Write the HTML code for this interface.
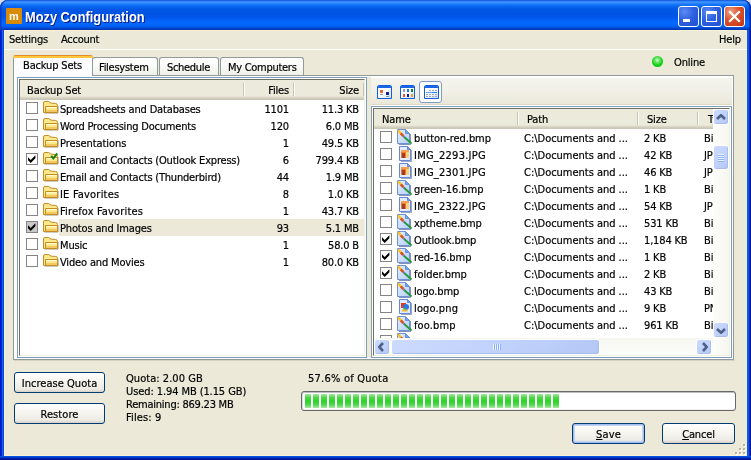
<!DOCTYPE html>
<html>
<head>
<meta charset="utf-8">
<title>Mozy Configuration</title>
<style>
html,body{margin:0;padding:0;}
body{width:751px;height:460px;overflow:hidden;background:#ECE9D8;position:relative;
  font-family:"DejaVu Sans Condensed","Liberation Sans",sans-serif;font-size:11px;color:#000;letter-spacing:-0.16px;}
*{box-sizing:border-box;}
.abs{position:absolute;}
.t{-webkit-text-stroke:0.2px currentColor;opacity:0.999;position:absolute;white-space:nowrap;line-height:13px;height:13px;}
/* window frame */
#titlebar{left:0;top:0;width:751px;height:30px;
  background:linear-gradient(to bottom,#0A44D2 0px,#2C80F8 1px,#3C90FF 2.5px,#1C7CFC 4px,#0A68F2 6px,#0259E6 9px,#0054E3 13px,#0056E8 17px,#0260F6 20px,#0468FF 23px,#0366FC 25px,#025CEE 26.5px,#004CD6 28px,#0038B4 29.5px,#0034AC 30px);
  border-radius:8px 8px 0 0;box-shadow:inset 1px 0 0 #0A3CC8,inset -1px 0 0 #0028A8,inset 2px 0 0 rgba(10,60,200,.5),inset -2px 0 0 rgba(0,40,168,.6);}
#bl{left:0;top:30px;width:4px;height:430px;background:linear-gradient(to right,#0019cf 0,#0019cf 1px,#0424d6 1px,#0424d6 2px,#1464e8 2px,#1464e8 3px,#0448d8 3px);}
#br{left:747px;top:30px;width:4px;height:430px;background:linear-gradient(to left,#00138c 0,#00138c 1px,#0030c4 1px,#0030c4 2px,#0a5ce8 2px,#0a5ce8 3px,#0c58e2 3px);}
#bb{left:0;top:456px;width:751px;height:4px;background:linear-gradient(to top,#00138c 0,#00138c 1px,#001da5 1px,#001da5 2px,#0038d0 2px,#0038d0 3px,#0a50e0 3px);}
#hl{left:4px;top:30px;width:743px;height:426px;border:1px solid #F8F1D6;border-right-color:#F1ECD6;}
#title{-webkit-text-stroke:0;left:25px;top:8px;font:bold 14px "Liberation Sans",sans-serif;color:#fff;text-shadow:1px 1px 0 #0a1883;letter-spacing:0;line-height:18px;height:18px;transform:scaleX(0.915);transform-origin:0 0;}
#appicon{left:6px;top:8px;width:16px;height:16px;background:#D98A08;border-radius:1px;}
.cap{top:6px;width:21px;height:21px;border:1px solid #fff;border-radius:3px;
  background:radial-gradient(circle at 30% 25%,#5b8cf5 0,#2e61e0 45%,#1f4fd2 100%);}
#bclose{background:radial-gradient(circle at 30% 25%,#f0a184 0,#d9502e 45%,#c13414 100%);}

/* tabs */
.tab{position:absolute;top:57px;height:18px;border:1px solid #919B9C;border-bottom:none;border-radius:3px 3px 0 0;
  background:linear-gradient(to bottom,#ffffff 0%,#fbfbf9 40%,#f0f0ea 100%);}
.tab .t{top:3px;}
#tabsel{top:55px;height:21px;left:13px;width:80px;background:#FCFCFE;border-top:none;z-index:3;}
#tabsel:before{content:"";position:absolute;left:-1px;top:0;width:80px;height:3px;border-radius:3px 3px 0 0;
  background:linear-gradient(to bottom,#E68B2C 0,#E68B2C 1px,#FFC73C 1px,#FFC73C 3px);}
#pane{left:13px;top:75px;width:721px;height:285px;border:1px solid #919B9C;background:#FCFCFE;}
#paneshadow{left:14px;top:360px;width:721px;height:1px;background:#d5d2c2;}
/* list boxes */
.lbox{position:absolute;border:1px solid #7F9DB9;background:#fff;}
.linner{position:absolute;left:1px;top:1px;right:1px;bottom:1px;border:1px solid;border-color:#716F64 #F1EFE2 #F1EFE2 #716F64;background:#fff;overflow:hidden;}
.hdr{position:absolute;left:0;top:0;height:20px;background:linear-gradient(to bottom,#EBEADB 0,#EBEADB 16px,#E2DECD 17px,#D6D2C2 18px,#CBC7B8 19px,#CBC7B8 20px);}
.hsep{position:absolute;top:3px;width:2px;height:13px;background:linear-gradient(to right,#C7C5B2 0,#C7C5B2 1px,#fff 1px);}
.cb{position:absolute;width:12px;height:12px;border:1px solid #848484;background:#fff;}

.r{text-align:right;}
.cbg{background:#C9C9C9;}
.sbtn{position:absolute;width:16px;height:16px;border:1px solid #fff;border-radius:3px;background:linear-gradient(135deg,#CCDAFD 0%,#C1D2FB 50%,#B4C8F6 100%);box-shadow:inset -1px -1px 0 #A9BDEB;}

.btn{position:absolute;height:21px;border:1px solid #003C74;border-radius:3px;background:linear-gradient(to bottom,#ffffff 0%,#F6F5EF 45%,#ECEBE5 85%,#D6D0C5 100%);text-align:center;}
.btn .t{left:0;right:0;top:4px;text-align:center;}
.btn.def{box-shadow:inset 0 0 0 1px #A3BDEE, inset 0 0 0 2px #C2D5F8;}
</style>
</head>
<body>

<svg width="0" height="0" style="position:absolute">
<defs>
<linearGradient id="gf" x1="0" y1="0" x2="0" y2="1"><stop offset="0" stop-color="#FFF6AC"/><stop offset="0.6" stop-color="#FBE384"/><stop offset="0.65" stop-color="#F3C862"/><stop offset="1" stop-color="#F3C862"/></linearGradient>
<g id="fold">
<path d="M0.5 3 Q0.5 1.5 2 1.5 L5.5 1.5 Q6.8 1.5 7.3 3 L12.5 3.5 Q14.5 3.5 14.5 5.5 L14.5 12.5 L0.5 12.5 Z" fill="#FBE98E" stroke="#C48C22" stroke-width="1"/>
<path d="M2.5 6.5 L14.5 6.5 L14.5 12.5 L2.5 12.5 Z" fill="url(#gf)" stroke="#C48C22" stroke-width="1"/>
<path d="M3 7.5 L14 7.5" stroke="#FFFBD0" stroke-width="1"/>
<path d="M1.5 13.5 L15 13.5 M15.5 6 L15.5 13" stroke="#B8B4A6" stroke-width="1" opacity="0.7"/>
</g>
<g id="fold2">
<use href="#fold"/>
<path d="M8.2 5 L10.3 7.5 L14.2 2.3" stroke="#0E8212" stroke-width="2" fill="none"/>
</g>
<linearGradient id="gp" x1="0" y1="0" x2="1" y2="1"><stop offset="0" stop-color="#E4EEFF"/><stop offset="1" stop-color="#B6D0F8"/></linearGradient>
<g id="bmp">
<path d="M2 15.5 L13.5 15.5 L13.5 5" stroke="#5A6E9E" stroke-width="1" fill="none" opacity="0.75"/>
<path d="M0.5 0.5 L8.5 0.5 L12.5 4.5 L12.5 14.5 L0.5 14.5 Z" fill="url(#gp)" stroke="#7191D6" stroke-width="1"/>
<path d="M8.5 0.5 L8.5 4.5 L12.5 4.5 Z" fill="#68A6F4" stroke="#7191D6" stroke-width="1"/>
<path d="M1.8 2.2 L4 4.6" stroke="#F8C428" stroke-width="2.5" stroke-linecap="round"/>
<path d="M3.8 4.4 L6.4 7.2" stroke="#D8541E" stroke-width="2.7"/>
<path d="M6.4 7.2 L8 8.8" stroke="#6F7FB0" stroke-width="2.2"/>
<path d="M8 8.8 L14 14" stroke="#249A36" stroke-width="1.9" stroke-linecap="round"/>
</g>
<g id="page">
<path d="M4 15.5 L14.5 15.5 L14.5 4" stroke="#5A6E9E" stroke-width="1" fill="none" opacity="0.6"/>
<path d="M2.5 0.5 L10.5 0.5 L13.5 3.5 L13.5 14.5 L2.5 14.5 Z" fill="#E2ECFE" stroke="#6787D6" stroke-width="1"/>
<path d="M10.5 0.5 L10.5 3.5 L13.5 3.5 Z" fill="#68A6F4" stroke="#6787D6" stroke-width="1"/>
</g>
<g id="jpg">
<use href="#page"/>
<rect x="4" y="4" width="8" height="8" fill="#EE7A2C"/>
<rect x="4" y="4" width="8" height="2" fill="#F2A052"/>
<rect x="9" y="6" width="3" height="6" fill="#F8D27A"/>
<rect x="5" y="7" width="3" height="5" fill="#B8381C"/>
<rect x="6" y="9" width="1" height="3" fill="#5A4A6A"/>
</g>
<g id="png">
<use href="#page"/>
<rect x="4" y="4" width="5" height="5" fill="#E8381E"/>
<circle cx="9" cy="8" r="3" fill="#2A78E8"/>
<path d="M5 11.5 L10.5 11.5" stroke="#F0B828" stroke-width="2"/>
<path d="M7 9.5 L9 9.5" stroke="#38B048" stroke-width="1.6"/>
</g>
</defs>
</svg>
<!-- title bar -->
<div class="abs" style="left:0;top:0;width:8px;height:8px;background:#D6DEF4;"></div><div class="abs" style="left:743px;top:0;width:8px;height:8px;background:#D6DEF4;"></div>
<div class="abs" id="titlebar"></div>
<div class="abs" id="hl"></div><div class="abs" id="bl"></div><div class="abs" id="br"></div><div class="abs" id="bb"></div>
<div class="abs" id="appicon"><span class="abs" style="opacity:0.999;left:3px;top:2px;color:#fff;font:bold 11px 'Liberation Sans',sans-serif;line-height:13px;letter-spacing:0;">m</span></div>
<div class="t" id="title">Mozy Configuration</div>
<div class="abs cap" id="bmin" style="left:678px;"><div class="abs" style="left:4px;top:12px;width:7px;height:3px;background:#fff;"></div></div>
<div class="abs cap" id="bmax" style="left:701px;"><div class="abs" style="left:4px;top:4px;width:11px;height:11px;border:1px solid #fff;border-top-width:3px;"></div></div>
<div class="abs cap" id="bclose" style="left:724px;">
<svg class="abs" style="left:0;top:0" width="19" height="19" viewBox="0 0 19 19"><path d="M5 5 L14 14 M14 5 L5 14" stroke="#fff" stroke-width="2.2" stroke-linecap="square"/></svg>
</div>

<!-- menu bar -->
<div class="t" style="left:9px;top:33px;letter-spacing:-0.21px;">Settings</div>
<div class="t" style="left:61px;top:33px;letter-spacing:-0.26px;">Account</div>
<div class="t" style="left:719px;top:33px;">Help</div>
<div class="abs" style="left:4px;top:49px;width:743px;height:1px;background:#fff;"></div>


<!-- online indicator -->
<div class="abs" style="left:652px;top:56px;width:11px;height:11px;border-radius:50%;background:radial-gradient(circle at 48% 38%,#d4fbd0 0,#62e65e 28%,#10cc10 60%,#08c408 100%);"></div>
<div class="t" style="left:674px;top:56px;">Online</div>

<!-- tabs -->
<div class="abs" id="pane"></div>
<div class="abs" id="paneshadow"></div>
<div class="tab" id="tabsel"><div class="t" style="left:9px;top:4px;">Backup Sets</div></div>
<div class="tab" style="left:92px;width:66px;"><div class="t" style="left:6px;letter-spacing:-0.26px;">Filesystem</div></div>
<div class="tab" style="left:159px;width:60px;"><div class="t" style="left:7px;letter-spacing:-0.31px;">Schedule</div></div>
<div class="tab" style="left:220px;width:84px;"><div class="t" style="left:7px;letter-spacing:-0.28px;">My Computers</div></div>

<!-- splitter + toolbar -->
<div class="abs" style="left:367px;top:77px;width:4px;height:281px;background:#ECE9D8;"></div>
<div class="abs" style="left:371px;top:76px;width:361px;height:2px;background:#fff;"></div>
<div class="abs" style="left:371px;top:78px;width:361px;height:26px;background:linear-gradient(to bottom,#F4F4EE 0%,#F1F0E7 50%,#EDEBDE 85%,#EAE7D8 100%);"></div>
<div class="abs" style="left:371px;top:104px;width:361px;height:1px;background:#DCD8C6;"></div>
<div class="abs" style="left:371px;top:105px;width:361px;height:1px;background:#fff;"></div>
<div class="abs" style="left:419px;top:81px;width:23px;height:22px;border:1px solid #7F9BC9;border-radius:3px;background:#fff;"></div>
<svg class="abs" style="left:377px;top:85px" width="15" height="14" viewBox="0 0 15 14">
<defs><linearGradient id="gi" x1="0" y1="0" x2="1" y2="1"><stop offset="0.45" stop-color="#fff"/><stop offset="1" stop-color="#C6DCFA"/></linearGradient></defs>
<path d="M0.5 2 Q0.5 0.5 2 0.5 L13 0.5 Q14.5 0.5 14.5 2 L14.5 13.5 L0.5 13.5 Z" fill="url(#gi)" stroke="#0F5FE0"/><path d="M1 2 Q1 1 2 1 L13 1 Q14 1 14 2 L14 3 L1 3 Z" fill="#1C66E4"/>
<rect x="3" y="5" width="3" height="3" fill="#E8653A"/><rect x="3" y="9" width="3" height="1" fill="#8E96A6"/>
<rect x="9" y="7" width="3" height="3" fill="#10229A"/><rect x="9" y="11" width="3" height="1" fill="#8E96A6"/>
</svg>
<svg class="abs" style="left:400px;top:85px" width="15" height="14" viewBox="0 0 15 14">
<path d="M0.5 2 Q0.5 0.5 2 0.5 L13 0.5 Q14.5 0.5 14.5 2 L14.5 13.5 L0.5 13.5 Z" fill="url(#gi)" stroke="#0F5FE0"/><path d="M1 2 Q1 1 2 1 L13 1 Q14 1 14 2 L14 3 L1 3 Z" fill="#1C66E4"/>
<rect x="3" y="4" width="2" height="3" fill="#9A92CC"/><rect x="7" y="4" width="2" height="3" fill="#1C74E4"/><rect x="11" y="4" width="2" height="3" fill="#128424"/>
<rect x="3" y="9" width="2" height="3" fill="#E85424"/><rect x="7" y="9" width="2" height="3" fill="#121C94"/><rect x="11" y="9" width="2" height="3" fill="#E8A414"/>
</svg>
<svg class="abs" style="left:424px;top:85px" width="15" height="14" viewBox="0 0 15 14">
<path d="M0.5 2 Q0.5 0.5 2 0.5 L13 0.5 Q14.5 0.5 14.5 2 L14.5 13.5 L0.5 13.5 Z" fill="url(#gi)" stroke="#0F5FE0"/><path d="M1 2 Q1 1 2 1 L13 1 Q14 1 14 2 L14 3 L1 3 Z" fill="#1C66E4"/>
<path d="M5 5.5 L13 5.5" stroke="#A4A8B4" stroke-dasharray="2 1"/>
<path d="M2 7.5 L13 7.5" stroke="#5AA0F4"/><path d="M8 7.5 L13 7.5" stroke="#2C84F0"/>
<path d="M2 9.5 L13 9.5" stroke="#A4A8B4" stroke-dasharray="2 1"/>
<path d="M2 11.5 L13 11.5" stroke="#A4A8B4" stroke-dasharray="2 1"/>
</svg>

<!-- bottom area -->
<div class="btn" style="left:14px;top:372px;width:91px;"><div class="t" style="letter-spacing:0.04px;">Increase Quota</div></div>
<div class="btn" style="left:14px;top:403px;width:91px;"><div class="t" style="letter-spacing:0.09px;">Restore</div></div>
<div class="t" style="left:126px;top:372px;letter-spacing:0.04px;">Quota: 2.00 GB</div>
<div class="t" style="left:126px;top:385px;letter-spacing:-0.09px;">Used: 1.94 MB (1.15 GB)</div>
<div class="t" style="left:126px;top:398px;letter-spacing:-0.23px;">Remaining: 869.23 MB</div>
<div class="t" style="left:126px;top:411px;letter-spacing:0.14px;">Files: 9</div>
<div class="t" style="left:308px;top:372px;letter-spacing:0.23px;">57.6% of Quota</div>
<div class="abs" style="left:301px;top:391px;width:435px;height:20px;border:1px solid #686868;border-radius:3px;background:#fff;box-shadow:inset 0 1px 0 #BEBEBE, inset 1px 0 0 #DCDCDC, inset 0 -1px 0 #EFEFEF;">
<div class="abs" style="left:3px;top:2px;width:254px;height:14px;background:linear-gradient(to bottom,#A8E8A4 0%,#4CD848 25%,#2ED22A 50%,#4CD848 75%,#A8E8A4 100%);-webkit-mask:repeating-linear-gradient(to right,#000 0,#000 6px,transparent 6px,transparent 8px);mask:repeating-linear-gradient(to right,#000 0,#000 6px,transparent 6px,transparent 8px);"></div>
</div>
<div class="btn def" style="left:572px;top:423px;width:73px;"><div class="t" style="letter-spacing:0.19px;"><u>S</u>ave</div></div>
<div class="btn" style="left:662px;top:423px;width:73px;"><div class="t"><u>C</u>ancel</div></div>
<svg class="abs" style="left:735px;top:444px" width="12" height="12" viewBox="0 0 12 12">
<g fill="#B8B4A2"><rect x="8" y="0" width="2" height="2"/><rect x="4" y="4" width="2" height="2"/><rect x="8" y="4" width="2" height="2"/><rect x="0" y="8" width="2" height="2"/><rect x="4" y="8" width="2" height="2"/><rect x="8" y="8" width="2" height="2"/></g>
<g fill="#fff"><rect x="9" y="1" width="2" height="2"/><rect x="5" y="5" width="2" height="2"/><rect x="9" y="5" width="2" height="2"/><rect x="1" y="9" width="2" height="2"/><rect x="5" y="9" width="2" height="2"/><rect x="9" y="9" width="2" height="2"/></g>
<g fill="#B8B4A2"><rect x="8" y="0" width="2" height="2"/><rect x="4" y="4" width="2" height="2"/><rect x="8" y="4" width="2" height="2"/><rect x="0" y="8" width="2" height="2"/><rect x="4" y="8" width="2" height="2"/><rect x="8" y="8" width="2" height="2"/></g>
</svg>
<!--LEFTLIST-->
<div class="lbox" style="left:17px;top:77px;width:350px;height:281px;"><div class="linner">
<div class="hdr" style="width:344px;"></div>
<div class="hsep" style="left:223px;"></div><div class="hsep" style="left:273px;"></div><div class="hsep" style="left:343px;"></div>
<div class="t" style="left:7px;top:4px;">Backup Set</div>
<div class="t r" style="left:225px;width:44px;top:4px;">Files</div>
<div class="t r" style="left:275px;width:64px;top:4px;">Size</div>
<div class="cb" style="left:6px;top:22px;"></div>
<svg class="abs" style="left:23px;top:20px" width="16" height="16"><use href="#fold"/></svg>
<div class="t" style="left:40px;top:23px;">Spreadsheets and Databases</div>
<div class="t r" style="left:225px;width:44px;top:23px;">1101</div>
<div class="t r" style="left:275px;width:64px;top:23px;">11.3 KB</div>
<div class="cb" style="left:6px;top:39px;"></div>
<svg class="abs" style="left:23px;top:37px" width="16" height="16"><use href="#fold"/></svg>
<div class="t" style="left:40px;top:40px;letter-spacing:-0.2px;">Word Processing Documents</div>
<div class="t r" style="left:225px;width:44px;top:40px;">120</div>
<div class="t r" style="left:275px;width:64px;top:40px;">6.0 MB</div>
<div class="cb" style="left:6px;top:56px;"></div>
<svg class="abs" style="left:23px;top:54px" width="16" height="16"><use href="#fold"/></svg>
<div class="t" style="left:40px;top:57px;letter-spacing:-0.08px;">Presentations</div>
<div class="t r" style="left:225px;width:44px;top:57px;">1</div>
<div class="t r" style="left:275px;width:64px;top:57px;">49.5 KB</div>
<div class="cb" style="left:6px;top:73px;"><svg class="abs" style="left:1px;top:1px" width="8" height="8" viewBox="0 0 8 8"><path d="M0 2.2 L2.7 4.9 L7.4 0.2 L7.4 3.2 L2.7 7.9 L0 5.2 Z" fill="#000"/></svg></div>
<svg class="abs" style="left:23px;top:71px" width="16" height="16"><use href="#fold2"/></svg>
<div class="t" style="left:40px;top:74px;letter-spacing:-0.2px;">Email and Contacts (Outlook Express)</div>
<div class="t r" style="left:225px;width:44px;top:74px;">6</div>
<div class="t r" style="left:275px;width:64px;top:74px;">799.4 KB</div>
<div class="cb" style="left:6px;top:90px;"></div>
<svg class="abs" style="left:23px;top:88px" width="16" height="16"><use href="#fold"/></svg>
<div class="t" style="left:40px;top:91px;letter-spacing:-0.205px;">Email and Contacts (Thunderbird)</div>
<div class="t r" style="left:225px;width:44px;top:91px;">44</div>
<div class="t r" style="left:275px;width:64px;top:91px;">1.9 MB</div>
<div class="cb" style="left:6px;top:107px;"></div>
<svg class="abs" style="left:23px;top:105px" width="16" height="16"><use href="#fold"/></svg>
<div class="t" style="left:40px;top:108px;letter-spacing:0.2px;">IE Favorites</div>
<div class="t r" style="left:225px;width:44px;top:108px;">8</div>
<div class="t r" style="left:275px;width:64px;top:108px;">1.0 KB</div>
<div class="cb" style="left:6px;top:124px;"></div>
<svg class="abs" style="left:23px;top:122px" width="16" height="16"><use href="#fold"/></svg>
<div class="t" style="left:40px;top:125px;letter-spacing:0.16px;">Firefox Favorites</div>
<div class="t r" style="left:225px;width:44px;top:125px;">1</div>
<div class="t r" style="left:275px;width:64px;top:125px;">43.7 KB</div>
<div class="abs" style="left:39px;top:139px;width:305px;height:17px;background:#ECE9D8;"></div>
<div class="cb cbg" style="left:6px;top:141px;"><svg class="abs" style="left:1px;top:1px" width="8" height="8" viewBox="0 0 8 8"><path d="M0 2.2 L2.7 4.9 L7.4 0.2 L7.4 3.2 L2.7 7.9 L0 5.2 Z" fill="#000"/></svg></div>
<svg class="abs" style="left:23px;top:139px" width="16" height="16"><use href="#fold"/></svg>
<div class="t" style="left:40px;top:142px;">Photos and Images</div>
<div class="t r" style="left:225px;width:44px;top:142px;">93</div>
<div class="t r" style="left:275px;width:64px;top:142px;">5.1 MB</div>
<div class="cb" style="left:6px;top:158px;"></div>
<svg class="abs" style="left:23px;top:156px" width="16" height="16"><use href="#fold"/></svg>
<div class="t" style="left:40px;top:159px;">Music</div>
<div class="t r" style="left:225px;width:44px;top:159px;">1</div>
<div class="t r" style="left:275px;width:64px;top:159px;">58.0 B</div>
<div class="cb" style="left:6px;top:175px;"></div>
<svg class="abs" style="left:23px;top:173px" width="16" height="16"><use href="#fold"/></svg>
<div class="t" style="left:40px;top:176px;">Video and Movies</div>
<div class="t r" style="left:225px;width:44px;top:176px;">1</div>
<div class="t r" style="left:275px;width:64px;top:176px;">80.0 KB</div>
</div></div>
<!--/LEFTLIST-->
<!--RIGHTLIST-->
<div class="lbox" style="left:371px;top:106px;width:361px;height:252px;"><div class="linner">
<div class="abs" style="left:0;top:0;width:339px;height:229px;overflow:hidden;">
<div class="hdr" style="width:339px;"></div>
<div class="hsep" style="left:143px;"></div><div class="hsep" style="left:263px;"></div><div class="hsep" style="left:323px;"></div>
<div class="t" style="left:8px;top:4px;">Name</div>
<div class="t" style="left:153px;top:4px;">Path</div>
<div class="t" style="left:273px;top:4px;">Size</div>
<div class="t" style="left:334px;top:4px;">Type</div>
<div class="cb" style="left:6px;top:22px;"></div>
<svg class="abs" style="left:23px;top:20px" width="16" height="16"><use href="#bmp"/></svg>
<div class="t" style="left:40px;top:23px;letter-spacing:-0.06px;">button-red.bmp</div>
<div class="t" style="left:150px;top:23px;letter-spacing:-0.02px;">C:\Documents and ...</div>
<div class="t" style="left:270px;top:23px;">2 KB</div>
<div class="t" style="left:330px;top:23px;">Bitmap Image</div>
<div class="cb" style="left:6px;top:39px;"></div>
<svg class="abs" style="left:23px;top:37px" width="16" height="16"><use href="#jpg"/></svg>
<div class="t" style="left:40px;top:40px;letter-spacing:0.24px;">IMG_2293.JPG</div>
<div class="t" style="left:150px;top:40px;letter-spacing:-0.02px;">C:\Documents and ...</div>
<div class="t" style="left:270px;top:40px;">42 KB</div>
<div class="t" style="left:330px;top:40px;">JPEG Image</div>
<div class="cb" style="left:6px;top:56px;"></div>
<svg class="abs" style="left:23px;top:54px" width="16" height="16"><use href="#jpg"/></svg>
<div class="t" style="left:40px;top:57px;letter-spacing:0.24px;">IMG_2301.JPG</div>
<div class="t" style="left:150px;top:57px;letter-spacing:-0.02px;">C:\Documents and ...</div>
<div class="t" style="left:270px;top:57px;">46 KB</div>
<div class="t" style="left:330px;top:57px;">JPEG Image</div>
<div class="cb" style="left:6px;top:73px;"></div>
<svg class="abs" style="left:23px;top:71px" width="16" height="16"><use href="#bmp"/></svg>
<div class="t" style="left:40px;top:74px;letter-spacing:-0.06px;">green-16.bmp</div>
<div class="t" style="left:150px;top:74px;letter-spacing:-0.02px;">C:\Documents and ...</div>
<div class="t" style="left:270px;top:74px;">1 KB</div>
<div class="t" style="left:330px;top:74px;">Bitmap Image</div>
<div class="cb" style="left:6px;top:90px;"></div>
<svg class="abs" style="left:23px;top:88px" width="16" height="16"><use href="#jpg"/></svg>
<div class="t" style="left:40px;top:91px;letter-spacing:0.24px;">IMG_2322.JPG</div>
<div class="t" style="left:150px;top:91px;letter-spacing:-0.02px;">C:\Documents and ...</div>
<div class="t" style="left:270px;top:91px;">54 KB</div>
<div class="t" style="left:330px;top:91px;">JPEG Image</div>
<div class="cb" style="left:6px;top:107px;"></div>
<svg class="abs" style="left:23px;top:105px" width="16" height="16"><use href="#bmp"/></svg>
<div class="t" style="left:40px;top:108px;">xptheme.bmp</div>
<div class="t" style="left:150px;top:108px;letter-spacing:-0.02px;">C:\Documents and ...</div>
<div class="t" style="left:270px;top:108px;">531 KB</div>
<div class="t" style="left:330px;top:108px;">Bitmap Image</div>
<div class="cb" style="left:6px;top:124px;"><svg class="abs" style="left:1px;top:1px" width="8" height="8" viewBox="0 0 8 8"><path d="M0 2.2 L2.7 4.9 L7.4 0.2 L7.4 3.2 L2.7 7.9 L0 5.2 Z" fill="#000"/></svg></div>
<svg class="abs" style="left:23px;top:122px" width="16" height="16"><use href="#bmp"/></svg>
<div class="t" style="left:40px;top:125px;">Outlook.bmp</div>
<div class="t" style="left:150px;top:125px;letter-spacing:-0.02px;">C:\Documents and ...</div>
<div class="t" style="left:270px;top:125px;">1,184 KB</div>
<div class="t" style="left:330px;top:125px;">Bitmap Image</div>
<div class="cb" style="left:6px;top:141px;"><svg class="abs" style="left:1px;top:1px" width="8" height="8" viewBox="0 0 8 8"><path d="M0 2.2 L2.7 4.9 L7.4 0.2 L7.4 3.2 L2.7 7.9 L0 5.2 Z" fill="#000"/></svg></div>
<svg class="abs" style="left:23px;top:139px" width="16" height="16"><use href="#bmp"/></svg>
<div class="t" style="left:40px;top:142px;letter-spacing:-0.03px;">red-16.bmp</div>
<div class="t" style="left:150px;top:142px;letter-spacing:-0.02px;">C:\Documents and ...</div>
<div class="t" style="left:270px;top:142px;">1 KB</div>
<div class="t" style="left:330px;top:142px;">Bitmap Image</div>
<div class="cb" style="left:6px;top:158px;"><svg class="abs" style="left:1px;top:1px" width="8" height="8" viewBox="0 0 8 8"><path d="M0 2.2 L2.7 4.9 L7.4 0.2 L7.4 3.2 L2.7 7.9 L0 5.2 Z" fill="#000"/></svg></div>
<svg class="abs" style="left:23px;top:156px" width="16" height="16"><use href="#bmp"/></svg>
<div class="t" style="left:40px;top:159px;letter-spacing:-0.03px;">folder.bmp</div>
<div class="t" style="left:150px;top:159px;letter-spacing:-0.02px;">C:\Documents and ...</div>
<div class="t" style="left:270px;top:159px;">2 KB</div>
<div class="t" style="left:330px;top:159px;">Bitmap Image</div>
<div class="cb" style="left:6px;top:175px;"></div>
<svg class="abs" style="left:23px;top:173px" width="16" height="16"><use href="#bmp"/></svg>
<div class="t" style="left:40px;top:176px;">logo.bmp</div>
<div class="t" style="left:150px;top:176px;letter-spacing:-0.02px;">C:\Documents and ...</div>
<div class="t" style="left:270px;top:176px;">43 KB</div>
<div class="t" style="left:330px;top:176px;">Bitmap Image</div>
<div class="cb" style="left:6px;top:192px;"></div>
<svg class="abs" style="left:23px;top:190px" width="16" height="16"><use href="#png"/></svg>
<div class="t" style="left:40px;top:193px;letter-spacing:0.14px;">logo.png</div>
<div class="t" style="left:150px;top:193px;letter-spacing:-0.02px;">C:\Documents and ...</div>
<div class="t" style="left:270px;top:193px;">9 KB</div>
<div class="t" style="left:330px;top:193px;">PNG Image</div>
<div class="cb" style="left:6px;top:209px;"></div>
<svg class="abs" style="left:23px;top:207px" width="16" height="16"><use href="#bmp"/></svg>
<div class="t" style="left:40px;top:210px;letter-spacing:0.14px;">foo.bmp</div>
<div class="t" style="left:150px;top:210px;letter-spacing:-0.02px;">C:\Documents and ...</div>
<div class="t" style="left:270px;top:210px;">961 KB</div>
<div class="t" style="left:330px;top:210px;">Bitmap Image</div>
<div class="cb" style="left:6px;top:226px;"></div>
<svg class="abs" style="left:23px;top:224px" width="16" height="16"><use href="#bmp"/></svg>
<div class="t" style="left:40px;top:227px;">mozy-backup.bmp</div>
<div class="t" style="left:150px;top:227px;letter-spacing:-0.02px;">C:\Documents and ...</div>
<div class="t" style="left:270px;top:227px;">12 KB</div>
<div class="t" style="left:330px;top:227px;">Bitmap Image</div>
</div>
<div class="abs" style="left:339px;top:0;width:16px;height:246px;background:linear-gradient(to right,#FDFDFB 0,#F6F6F1 100%);"></div>
<div class="sbtn" style="left:339px;top:0px;"><svg class="abs" style="left:2px;top:4px" width="10" height="6" viewBox="0 0 10 6"><path d="M1 5 L5 1.2 L9 5" stroke="#4D6185" stroke-width="2.6" fill="none"/></svg></div>
<div class="sbtn" style="left:339px;top:213px;"><svg class="abs" style="left:2px;top:5px" width="10" height="6" viewBox="0 0 10 6"><path d="M1 1 L5 4.8 L9 1" stroke="#4D6185" stroke-width="2.6" fill="none"/></svg></div>
<div class="sbtn" style="left:339px;top:36px;height:25px;"><div class="abs" style="left:4px;top:8px;width:6px;height:8px;background:repeating-linear-gradient(to bottom,#EEF4FE 0,#EEF4FE 1px,#8CB0F8 1px,#8CB0F8 2px);"></div></div>
<div class="abs" style="left:0;top:229px;width:339px;height:17px;background:linear-gradient(to bottom,#F6F6F1 0,#FDFDFB 100%);"></div>
<div class="sbtn" style="left:0px;top:230px;"><svg class="abs" style="left:3px;top:2px" width="6" height="10" viewBox="0 0 6 10"><path d="M5 1 L1.2 5 L5 9" stroke="#4D6185" stroke-width="2.6" fill="none"/></svg></div>
<div class="sbtn" style="left:322px;top:230px;"><svg class="abs" style="left:5px;top:2px" width="6" height="10" viewBox="0 0 6 10"><path d="M1 1 L4.8 5 L1 9" stroke="#4D6185" stroke-width="2.6" fill="none"/></svg></div>
<div class="sbtn" style="left:17px;top:230px;width:209px;"><div class="abs" style="left:101px;top:4px;width:8px;height:6px;background:repeating-linear-gradient(to right,#EEF4FE 0,#EEF4FE 1px,#8CB0F8 1px,#8CB0F8 2px);"></div></div>
</div></div>
<!--/RIGHTLIST-->
</body>
</html>
